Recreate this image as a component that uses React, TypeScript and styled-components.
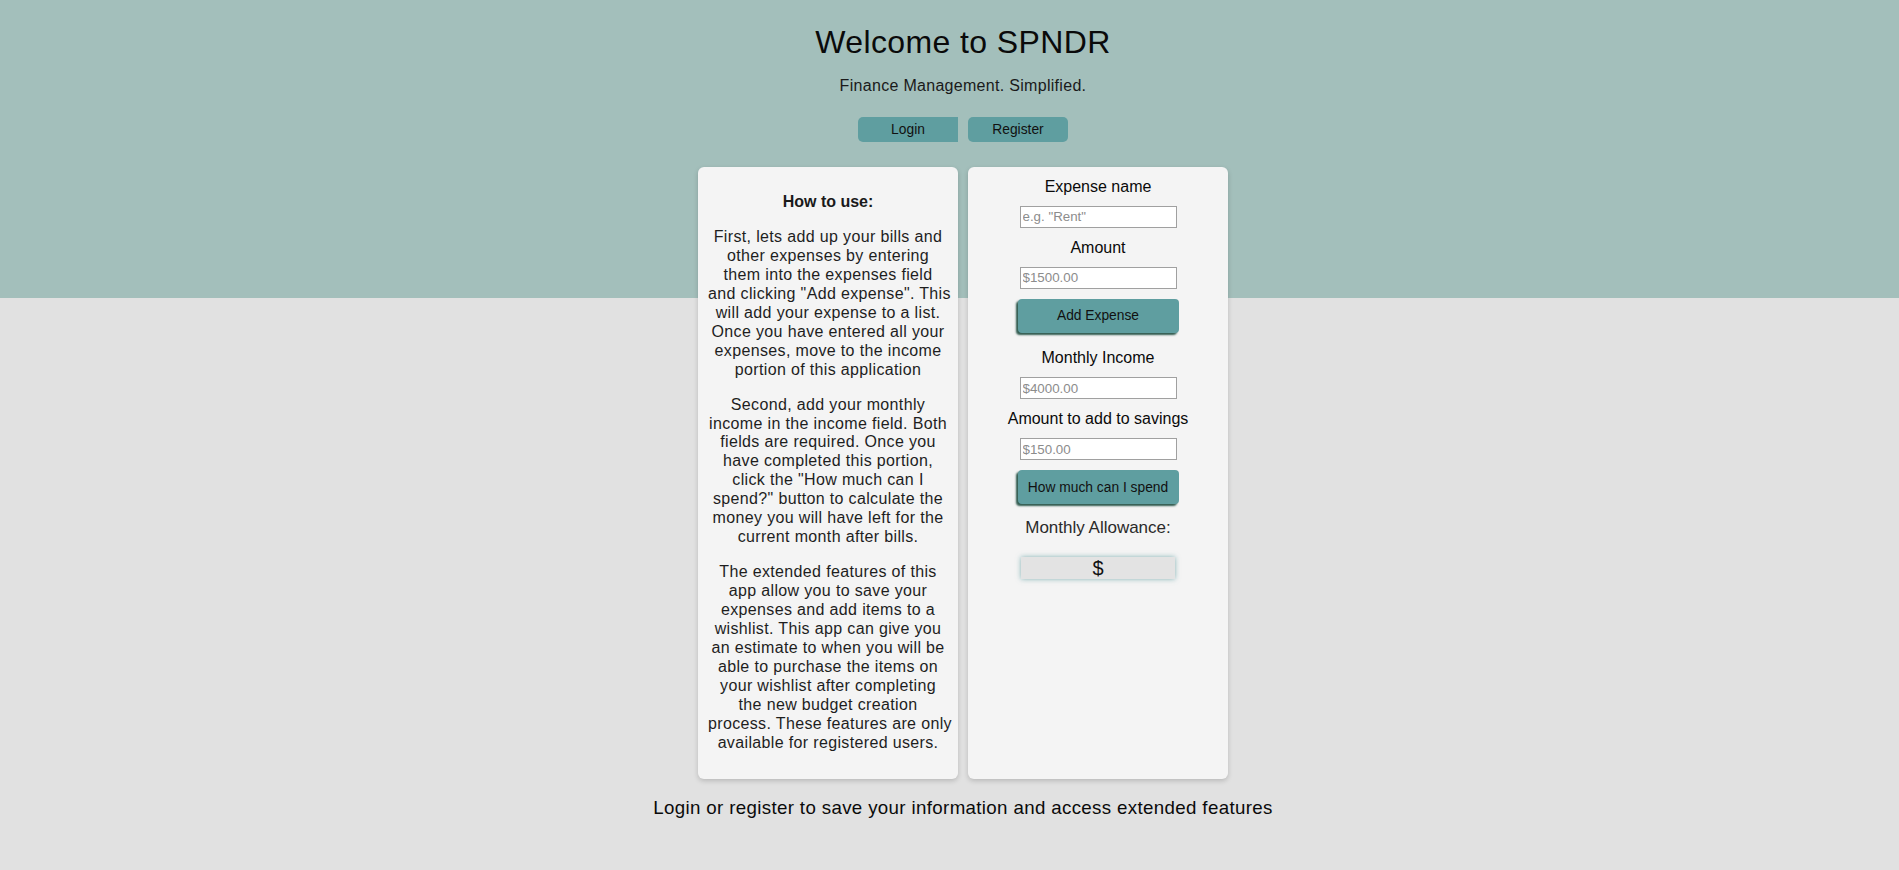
import React from "react";
import styled, { createGlobalStyle } from "styled-components";

const GlobalStyle = createGlobalStyle`
  html, body {
    margin: 0;
    padding: 0;
    background: #e1e1e1;
  }
  body {
    font-family: "Liberation Sans", Arial, sans-serif;
    color: #111;
  }
`;

const Page = styled.div`
  min-height: 100vh;
  box-sizing: border-box;
  padding: 24px 0 0 27px;
  display: flex;
  flex-direction: column;
  align-items: center;
  background: linear-gradient(
    to bottom,
    #a3bfbb 0,
    #a3bfbb 298px,
    #e1e1e1 298px,
    #e1e1e1 100%
  );
`;

const Title = styled.h1`
  margin: 0;
  font-size: 32px;
  font-weight: 400;
  line-height: 37.6px;
  color: #0a0a0a;
  letter-spacing: 0.4px;
`;

const Subtitle = styled.p`
  margin: 15px 0 0;
  font-size: 16px;
  line-height: 18.8px;
  color: #1a1a1a;
  letter-spacing: 0.3px;
`;

const Nav = styled.nav`
  margin-top: 21.6px;
  display: flex;
  gap: 10px;
`;

const NavButton = styled.button<{ $radius: string }>`
  width: 100px;
  height: 25px;
  border: none;
  border-radius: ${(p) => p.$radius};
  background: #5f9ea0;
  color: #111;
  font-family: "Liberation Sans", Arial, sans-serif;
  font-size: 13.8px;
  padding: 0;
  cursor: pointer;
`;

const Cards = styled.main`
  margin-top: 25px;
  display: flex;
  gap: 10px;
  align-items: stretch;
`;

const Card = styled.section`
  width: 260px;
  box-sizing: border-box;
  padding: 10px;
  background: #f4f4f4;
  border-radius: 6px;
  box-shadow: 0 2px 5px rgba(0, 0, 0, 0.18);
`;

const InfoHeading = styled.h4`
  margin: 16px 0;
  font-size: 16px;
  font-weight: 700;
  line-height: 18.95px;
  text-align: center;
  color: #1a1a1a;
`;

const InfoText = styled.p`
  margin: 16px 0;
  font-size: 16px;
  line-height: 18.95px;
  text-align: center;
  color: #1e1e1e;
  white-space: nowrap;
  letter-spacing: 0.35px;
`;

const Form = styled.form`
  display: flex;
  flex-direction: column;
  align-items: center;
  gap: 10px;
`;

const Label = styled.label<{ $extra?: number }>`
  margin-top: ${(p) => p.$extra ?? 0}px;
  font-size: 16px;
  line-height: 19px;
  color: #0a0a0a;
`;

const Input = styled.input`
  width: 157px;
  height: 22px;
  box-sizing: border-box;
  border: 1px solid #a0a0a0;
  background: #fff;
  padding: 0 2px;
  font-family: "Liberation Sans", Arial, sans-serif;
  font-size: 13.33px;
  color: #222;
  &::placeholder {
    color: #8c8c8c;
  }
`;

const ActionButton = styled.button`
  width: 161px;
  height: 34px;
  border: none;
  border-radius: 4px;
  background: #5f9ea0;
  box-shadow: -2px 2px 2px #2f5a4e;
  color: #111;
  font-family: "Liberation Sans", Arial, sans-serif;
  font-size: 13.8px;
  padding: 0;
  cursor: pointer;
`;

const AllowanceLabel = styled.div`
  margin-top: 4px;
  font-size: 17px;
  line-height: 20px;
  color: #2a2a2a;
  font-weight: 400;
`;

const AllowanceBox = styled.div`
  margin-top: 9px;
  width: 154px;
  height: 22px;
  box-sizing: border-box;
  background: #e3e3e3;
  box-shadow: 0 0 5px rgba(95, 158, 160, 0.75);
  display: flex;
  align-items: center;
  justify-content: center;
  font-size: 20px;
  color: #111;
`;

const Footer = styled.h3`
  margin: 18.7px 0;
  font-size: 18.72px;
  font-weight: 400;
  line-height: 22px;
  color: #0a0a0a;
  letter-spacing: 0.35px;
`;

const paragraphs: string[][] = [
  [
    "First, lets add up your bills and",
    "other expenses by entering",
    "them into the expenses field",
    "and clicking \"Add expense\". This",
    "will add your expense to a list.",
    "Once you have entered all your",
    "expenses, move to the income",
    "portion of this application",
  ],
  [
    "Second, add your monthly",
    "income in the income field. Both",
    "fields are required. Once you",
    "have completed this portion,",
    "click the \"How much can I",
    "spend?\" button to calculate the",
    "money you will have left for the",
    "current month after bills.",
  ],
  [
    "The extended features of this",
    "app allow you to save your",
    "expenses and add items to a",
    "wishlist. This app can give you",
    "an estimate to when you will be",
    "able to purchase the items on",
    "your wishlist after completing",
    "the new budget creation",
    "process. These features are only",
    "available for registered users.",
  ],
];

export default function App() {
  return (
    <>
      <GlobalStyle />
      <Page>
        <Title>Welcome to SPNDR</Title>
        <Subtitle>Finance Management. Simplified.</Subtitle>
        <Nav>
          <NavButton $radius="5px 0 0 5px">Login</NavButton>
          <NavButton $radius="5px">Register</NavButton>
        </Nav>
        <Cards>
          <Card>
            <InfoHeading>How to use:</InfoHeading>
            {paragraphs.map((lines, i) => (
              <InfoText key={i}>
                {lines.map((line, j) => (
                  <React.Fragment key={j}>
                    {line}
                    {j < lines.length - 1 && <br />}
                  </React.Fragment>
                ))}
              </InfoText>
            ))}
          </Card>
          <Card>
            <Form onSubmit={(e) => e.preventDefault()}>
              <Label>Expense name</Label>
              <Input placeholder={'e.g. "Rent"'} />
              <Label>Amount</Label>
              <Input placeholder="$1500.00" />
              <ActionButton type="button">Add Expense</ActionButton>
              <Label $extra={5.5}>Monthly Income</Label>
              <Input placeholder="$4000.00" />
              <Label>Amount to add to savings</Label>
              <Input placeholder="$150.00" />
              <ActionButton type="button">How much can I spend</ActionButton>
              <AllowanceLabel>Monthly Allowance:</AllowanceLabel>
              <AllowanceBox>$</AllowanceBox>
            </Form>
          </Card>
        </Cards>
        <Footer>
          Login or register to save your information and access extended features
        </Footer>
      </Page>
    </>
  );
}
